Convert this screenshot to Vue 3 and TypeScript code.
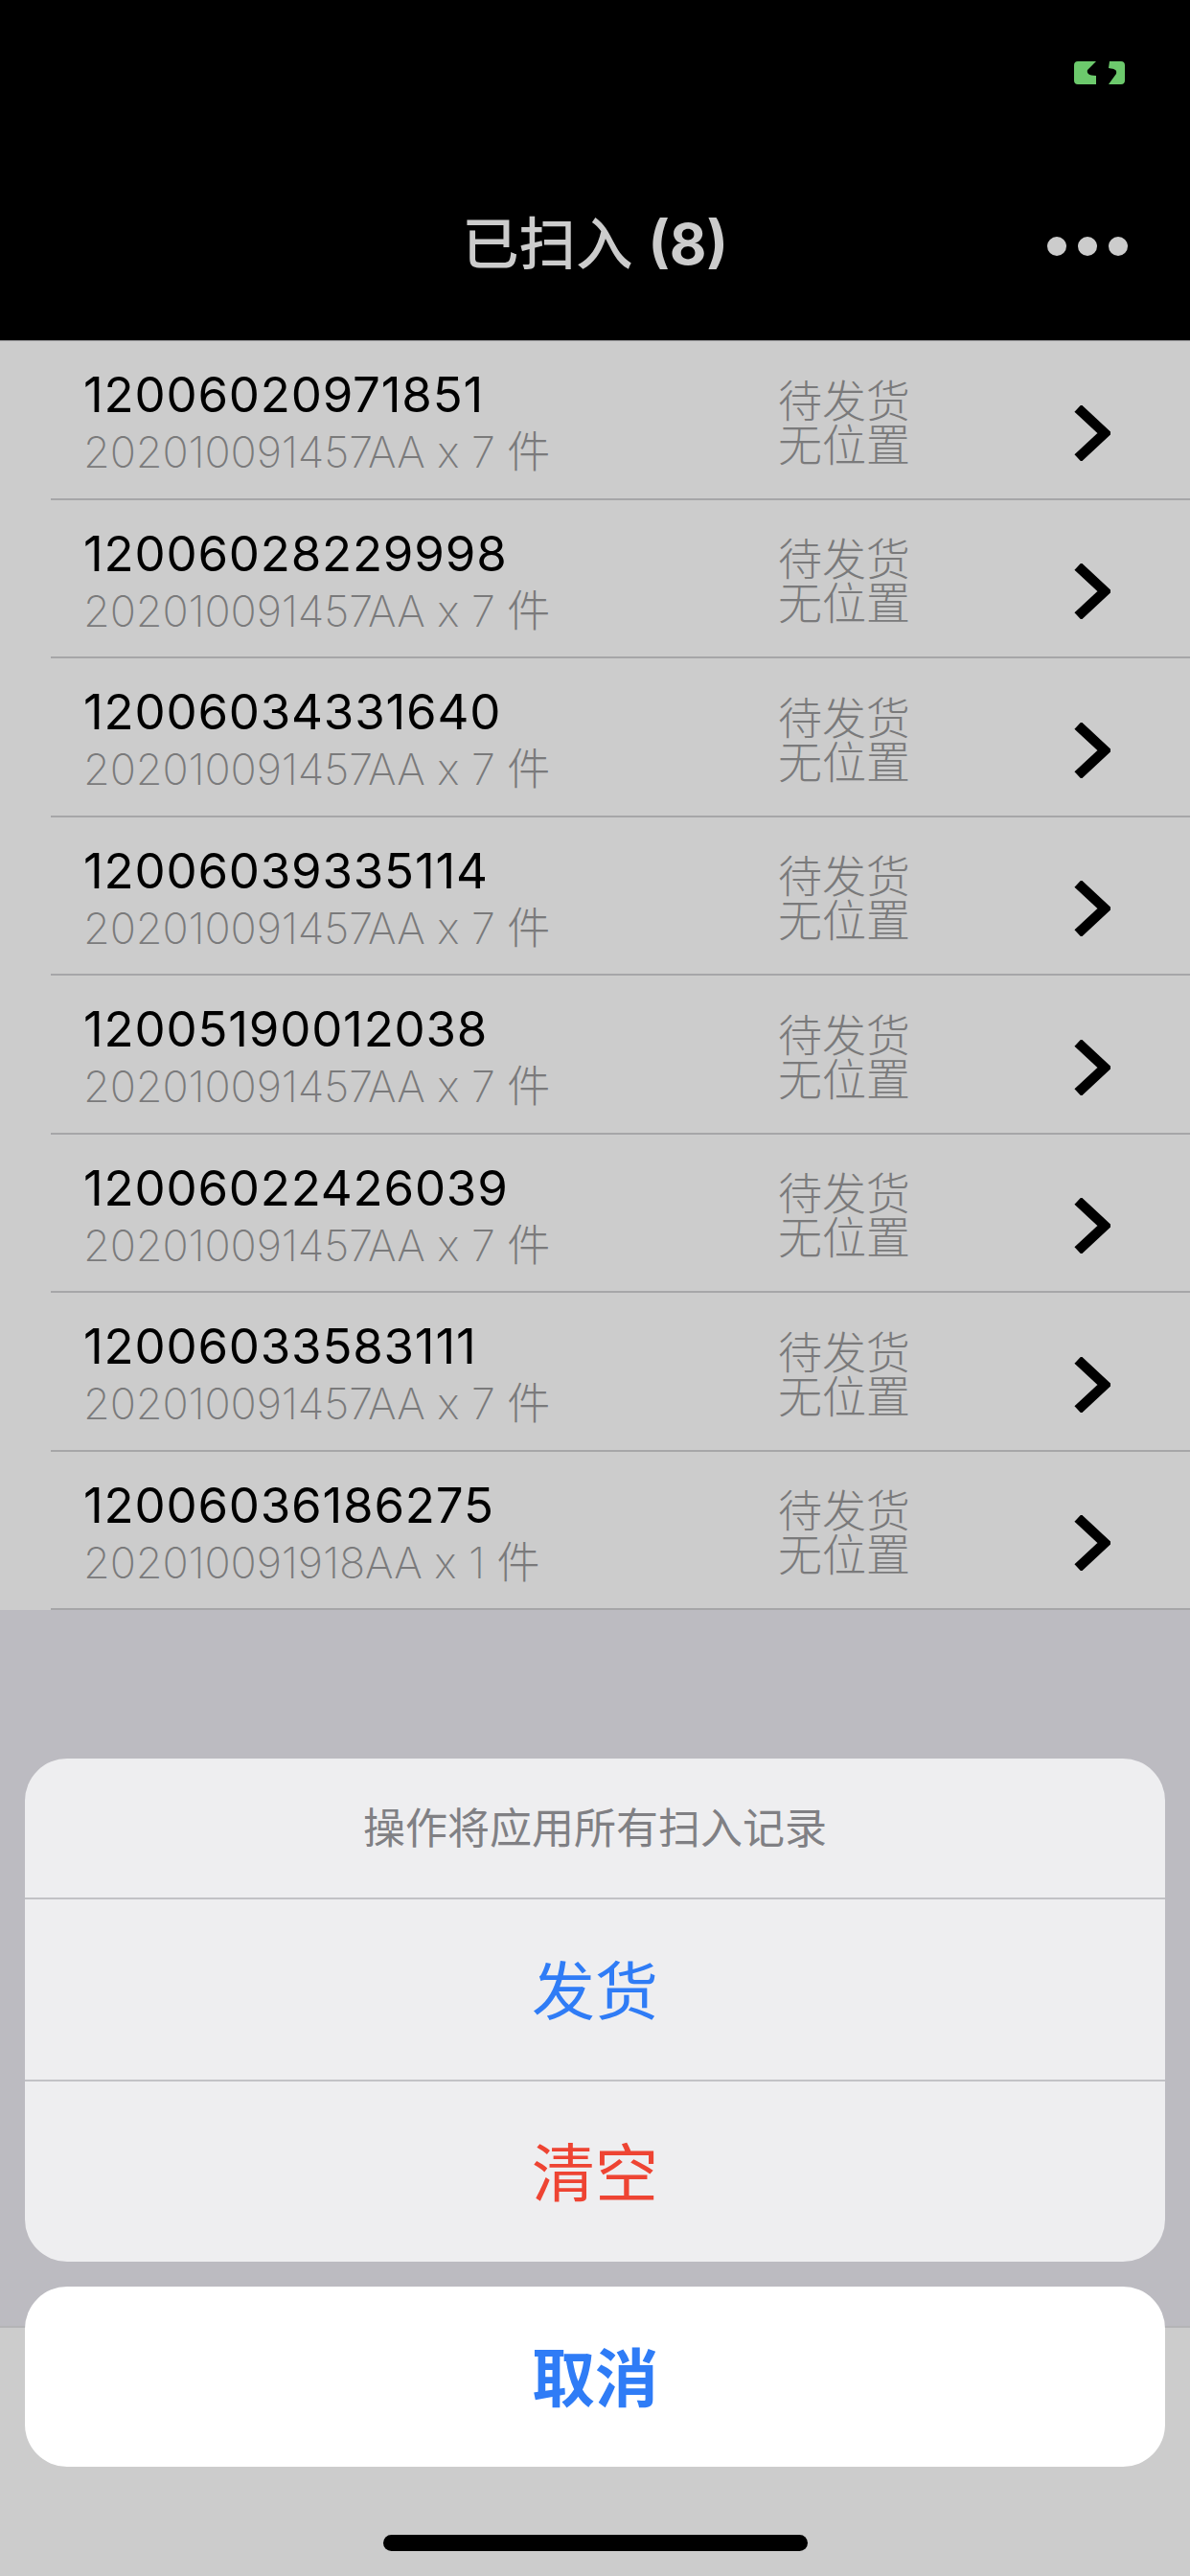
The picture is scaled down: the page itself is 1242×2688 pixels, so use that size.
<script setup lang="ts">
interface Row {
  code: string
  batch: string
  count: number
}

const rows: Row[] = [
  { code: '12006020971851', batch: '202010091457AA', count: 7 },
  { code: '12006028229998', batch: '202010091457AA', count: 7 },
  { code: '12006034331640', batch: '202010091457AA', count: 7 },
  { code: '12006039335114', batch: '202010091457AA', count: 7 },
  { code: '12005190012038', batch: '202010091457AA', count: 7 },
  { code: '12006022426039', batch: '202010091457AA', count: 7 },
  { code: '12006033583111', batch: '202010091457AA', count: 7 },
  { code: '12006036186275', batch: '202010091918AA', count: 1 },
]
</script>

<template>
  <div class="page">
    <header class="nav">
      <svg class="signal" viewBox="0 0 53 24" width="53" height="24">
        <path d="M4 0H23L14 9C13 12 15 15 23 15V24H4C1.500 24 0 22.500 0 20V4C0 1.500 1.500 0 4 0Z" fill="#6cc96c" />
        <path d="M37 0H49C51.500 0 53 1.500 53 4V20C53 22.500 51.500 24 49 24H36L44 13C45 9 43 8 36 7Z" fill="#6cc96c" />
      </svg>
      <h1 class="title">已扫入 <b>(8)</b></h1>
      <div class="more"><i></i><i></i><i></i></div>
    </header>

    <ul class="list">
      <li v-for="row in rows" :key="row.code" class="row">
        <div class="info">
          <div class="code">{{ row.code }}</div>
          <div class="batch">{{ row.batch }} x {{ row.count }} 件</div>
        </div>
        <div class="status">
          <div>待发货</div>
          <div>无位置</div>
        </div>
        <svg class="chevron" viewBox="0 0 38 58" width="38" height="58">
          <path d="M4 3L32 29L4 55" fill="none" stroke="#000" stroke-width="10.500" />
        </svg>
      </li>
    </ul>

    <div class="spacer"></div>
    <div class="tabbar"></div>

    <div class="sheet">
      <div class="group">
        <div class="sheet-title">操作将应用所有扫入记录</div>
        <button class="action blue">发货</button>
        <button class="action red">清空</button>
      </div>
      <button class="cancel">取消</button>
    </div>
    <div class="home"></div>
  </div>
</template>

<style>
html,
body {
  margin: 0;
  background: #ccc;
}
</style>

<style scoped>
.page {
  position: relative;
  width: 1242px;
  height: 2688px;
  display: flex;
  flex-direction: column;
  overflow: hidden;
  background: #bcbbc1;
  font-family: Inter, "Noto Sans CJK SC", sans-serif;
}
.nav {
  position: relative;
  flex: none;
  height: 356px;
  box-sizing: border-box;
  background: #000;
  border-bottom: 1px solid #99999c;
}
.signal {
  position: absolute;
  left: 1121px;
  top: 64px;
}
.title {
  position: absolute;
  left: 0;
  right: 0;
  top: 218px;
  margin: 0;
  text-align: center;
  color: #ccc;
  font-size: 59.500px;
  line-height: 72px;
  font-weight: 500;
  font-family: Inter, "Noto Sans CJK SC", sans-serif;
}
.title b {
  font-weight: 700;
}
.more {
  position: absolute;
  left: 1093px;
  top: 247px;
  display: flex;
  gap: 12px;
}
.more i {
  width: 20px;
  height: 20px;
  border-radius: 50%;
  background: #ccc;
}
.list {
  flex: none;
  margin: 0;
  padding: 0;
  list-style: none;
  background: #ccc;
}
.row {
  height: 165.500px;
  box-sizing: border-box;
  padding-left: 87px;
  display: flex;
  align-items: center;
  position: relative;
}
.row::after {
  content: "";
  position: absolute;
  left: 53px;
  right: 0;
  bottom: 0;
  height: 2px;
  background: #a6a6a8;
}
.info {
  width: 725px;
  padding-top: 1px;
  padding-bottom: 0;
}
.code {
  font-size: 51px;
  line-height: 58px;
  color: #000;
  font-weight: 400;
  letter-spacing: 0.800px;
}
.batch {
  font-size: 45px;
  line-height: 46px;
  margin-top: 8px;
  color: #7a7a7b;
  font-weight: 200;
  letter-spacing: -0.100px;
  white-space: nowrap;
}
.status {
  width: 309px;
  font-size: 46px;
  line-height: 46px;
  color: #7a7a7b;
  font-weight: 200;
  padding-top: 4px;
}
.chevron {
  flex: none;
  margin-top: 26px;
}
.spacer {
  flex: 1;
}
.tabbar {
  flex: none;
  height: 261px;
  background: #ccc;
  border-top: 2px solid #b4b4b6;
  box-sizing: border-box;
}
.sheet {
  position: absolute;
  left: 26px;
  width: 1190px;
  top: 1835px;
  display: flex;
  flex-direction: column;
  gap: 26px;
}
.group {
  border-radius: 44px;
  overflow: hidden;
  background: #eeeef0;
}
.sheet-title {
  height: 145px;
  box-sizing: border-box;
  padding-bottom: 6px;
  display: flex;
  align-items: center;
  justify-content: center;
  font-size: 44px;
  color: #808084;
  font-weight: 400;
}
.action {
  display: flex;
  align-items: center;
  justify-content: center;
  width: 100%;
  height: 190px;
  padding: 0 0 6px;
  background: transparent;
  border: 0;
  border-top: 2px solid #c2c2c6;
  font-family: inherit;
  font-size: 66px;
  font-weight: 400;
}
.blue {
  color: #2f7cf6;
}
.red {
  color: #ee4433;
}
.cancel {
  height: 188px;
  padding: 0 0 6px;
  background: #fff;
  border: 0;
  border-radius: 44px;
  color: #2f7cf6;
  font-family: inherit;
  font-size: 66px;
  font-weight: 600;
}
.home {
  position: absolute;
  left: 400px;
  top: 2645px;
  width: 443px;
  height: 17px;
  border-radius: 9px;
  background: #000;
}
</style>
